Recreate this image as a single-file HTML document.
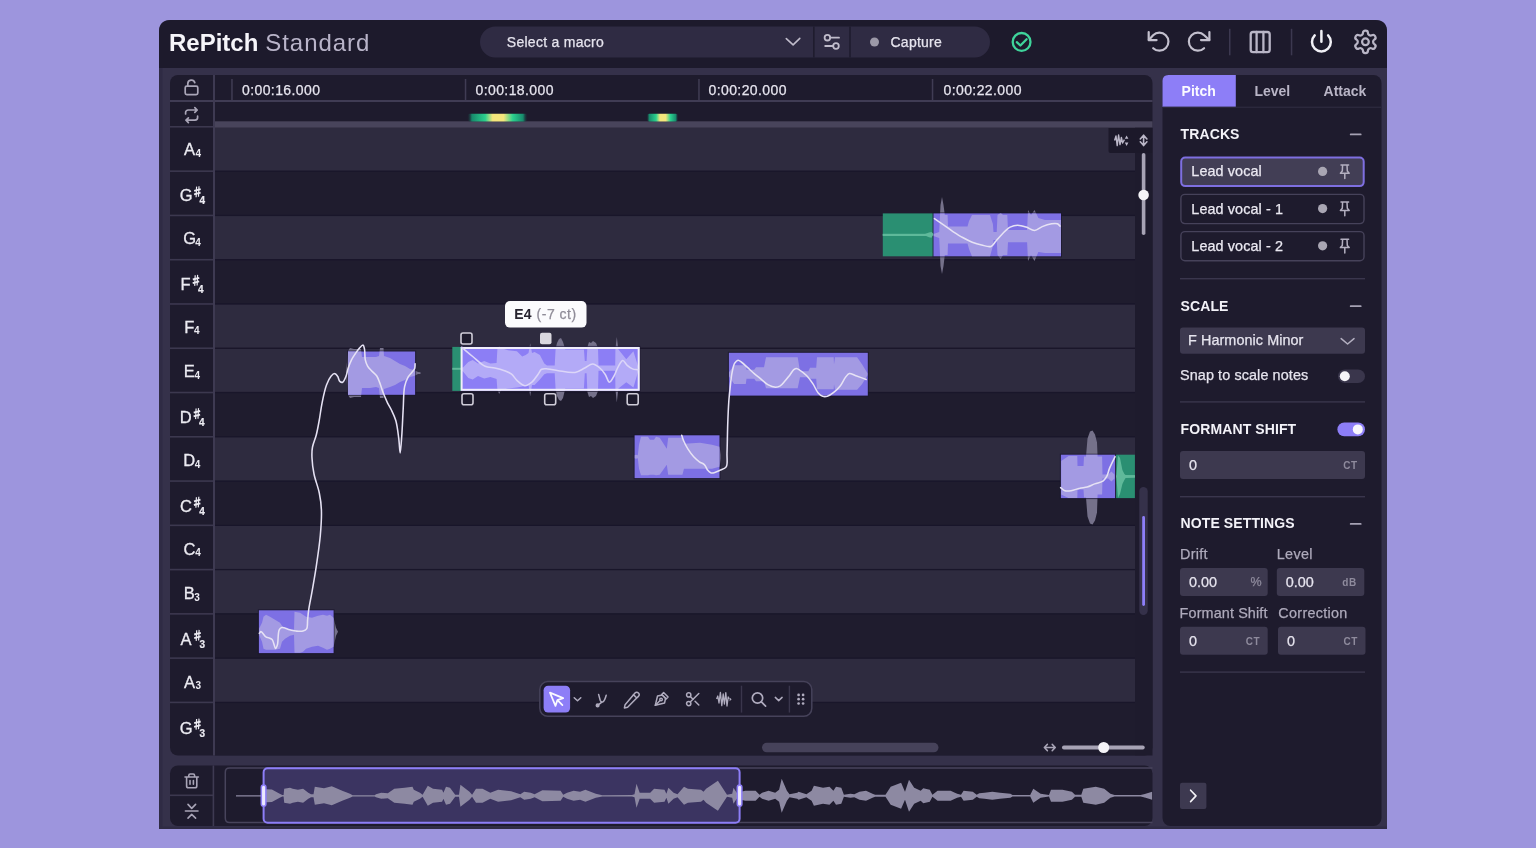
<!DOCTYPE html><html><head><meta charset="utf-8"><title>RePitch Standard</title><style>
*{box-sizing:border-box;margin:0;padding:0}
html,body{width:1536px;height:848px;overflow:hidden;background:#9d95dd;font-family:"Liberation Sans", sans-serif}
.a{position:absolute}
svg text{font-family:"Liberation Sans", sans-serif}
svg{will-change:transform}
</style></head><body>
<svg class="a" style="left:0;top:0" width="1536" height="848" viewBox="0 0 1536 848">
<defs>
<linearGradient id="mk" x1="0" x2="1" y1="0" y2="0"><stop offset="0" stop-color="#1e1b2d" stop-opacity="0"/><stop offset="0.08" stop-color="#178a6c"/><stop offset="0.3" stop-color="#2bd08e"/><stop offset="0.42" stop-color="#f4e67c"/><stop offset="0.6" stop-color="#f4e67c"/><stop offset="0.75" stop-color="#2bd08e"/><stop offset="0.92" stop-color="#178a6c"/><stop offset="1" stop-color="#1e1b2d" stop-opacity="0"/></linearGradient>
</defs>
<path d="M159,32 Q159,20 171,20 L1375,20 Q1387,20 1387,32 L1387,829 L159,829 Z" fill="#35314a"/>
<path d="M159,32 Q159,20 171,20 L1375,20 Q1387,20 1387,32 L1387,68 L159,68 Z" fill="#1d1a2c"/>
<rect x="159" y="68" width="3.5" height="761" fill="#2f2b44"/>
<rect x="159" y="826.6" width="1228" height="2.4" fill="#2f2b44"/>
<text x="169" y="50.8" font-size="24" font-weight="bold" fill="#f6f5fa">RePitch</text>
<text x="265.3" y="50.8" font-size="24" letter-spacing="0.95" fill="#b9b4c9">Standard</text>
<rect x="480" y="26.5" width="510" height="31" rx="15.5" fill="#2f2b43"/>
<rect x="813" y="26.5" width="1.6" height="31" fill="#1f1c2e"/>
<rect x="849.2" y="26.5" width="1.6" height="31" fill="#1f1c2e"/>
<text x="506.8" y="46.5" font-size="14" letter-spacing="0.28" stroke="#e6e4ee" stroke-width="0.25" fill="#e6e4ee">Select a macro</text>
<path d="M786.3,38.6 L793.1,44.8 L799.8,38.4" fill="none" stroke="#c0bccb" stroke-width="1.6" stroke-linecap="round" stroke-linejoin="round"/>
<g fill="none" stroke="#c0bccb" stroke-width="1.8" stroke-linecap="round"><circle cx="827.4" cy="37.7" r="2.8"/><path d="M830.3,37.7 H839"/><circle cx="836" cy="46" r="2.8"/><path d="M825.2,46 H833.1"/></g>
<circle cx="874.5" cy="42" r="4.5" fill="#9c99a8"/>
<text x="890.5" y="46.5" font-size="14" letter-spacing="0.25" stroke="#e6e4ee" stroke-width="0.25" fill="#e6e4ee">Capture</text>
<g fill="none" stroke="#3fd49b" stroke-width="2.3" stroke-linecap="round" stroke-linejoin="round"><circle cx="1021.6" cy="41.9" r="8.9"/><path d="M1016.8,42.2 L1020.4,45.5 L1026.6,39.3"/></g>
<g fill="none" stroke="#c3c0ce" stroke-width="2.2" stroke-linecap="round" stroke-linejoin="round">
<path d="M1153.2,48.2 A9,9 0 1 0 1153.1,35.3 L1148.8,40"/><path d="M1148.7,32 V40.1 H1156.6"/>
<path d="M1204.1,48.2 A9,9 0 1 1 1204.2,35.3 L1209.3,40"/><path d="M1209.4,32 V40.1 H1201"/>
</g>
<rect x="1229" y="28.8" width="1.5" height="26.5" fill="#3c3850"/>
<rect x="1290.8" y="28.8" width="1.5" height="26.5" fill="#3c3850"/>
<g fill="none" stroke="#b9b5c6" stroke-width="2.3" stroke-linecap="round" stroke-linejoin="round"><rect x="1250.7" y="32" width="19" height="20.2" rx="2.4"/><path d="M1256.6,32 V52.2 M1263.4,32 V52.2"/></g>
<g fill="none" stroke="#f1f0f6" stroke-width="2.5" stroke-linecap="round"><path d="M1321.4,31 V41.8"/><path d="M1328.1,35.4 A9.4,9.4 0 1 1 1314.7,35.4"/></g>
<g transform="translate(1352,28.4) scale(1.12)" fill="none" stroke="#b9b5c6" stroke-width="2" stroke-linecap="round" stroke-linejoin="round"><path d="M12.22 2h-.44a2 2 0 0 0-2 2v.18a2 2 0 0 1-1 1.73l-.43.25a2 2 0 0 1-2 0l-.15-.08a2 2 0 0 0-2.73.73l-.22.38a2 2 0 0 0 .73 2.73l.15.1a2 2 0 0 1 1 1.72v.51a2 2 0 0 1-1 1.74l-.15.09a2 2 0 0 0-.73 2.730l.22.38a2 2 0 0 0 2.73.73l.15-.08a2 2 0 0 1 2 0l.43.25a2 2 0 0 1 1 1.73V20a2 2 0 0 0 2 2h.44a2 2 0 0 0 2-2v-.18a2 2 0 0 1 1-1.73l.43-.25a2 2 0 0 1 2 0l.15.08a2 2 0 0 0 2.73-.73l.22-.39a2 2 0 0 0-.73-2.73l-.15-.08a2 2 0 0 1-1-1.74v-.5a2 2 0 0 1 1-1.74l.15-.09a2 2 0 0 0 .73-2.73l-.22-.38a2 2 0 0 0-2.73-.73l-.15.08a2 2 0 0 1-2 0l-.43-.25a2 2 0 0 1-1-1.73V4a2 2 0 0 0-2-2z"/><circle cx="12" cy="12" r="3"/></g>
<rect x="170" y="75" width="982.5" height="680.5" rx="8" fill="#1e1b2d"/>
<clipPath id="pclip"><rect x="170" y="75" width="982.5" height="680.5" rx="8"/></clipPath>
<g clip-path="url(#pclip)">
<rect x="215" y="126.90" width="920" height="44.27" fill="#2e2b3f"/>
<rect x="215" y="171.17" width="920" height="44.27" fill="#1f1c2e"/>
<rect x="215" y="170.52" width="920" height="1.3" fill="#19162a"/>
<rect x="170" y="170.37" width="43" height="1.6" fill="#3c384f"/>
<rect x="215" y="215.44" width="920" height="44.27" fill="#2e2b3f"/>
<rect x="215" y="214.79" width="920" height="1.3" fill="#19162a"/>
<rect x="170" y="214.64" width="43" height="1.6" fill="#3c384f"/>
<rect x="215" y="259.71" width="920" height="44.27" fill="#1f1c2e"/>
<rect x="215" y="259.06" width="920" height="1.3" fill="#19162a"/>
<rect x="170" y="258.91" width="43" height="1.6" fill="#3c384f"/>
<rect x="215" y="303.98" width="920" height="44.27" fill="#2e2b3f"/>
<rect x="215" y="303.33" width="920" height="1.3" fill="#19162a"/>
<rect x="170" y="303.18" width="43" height="1.6" fill="#3c384f"/>
<rect x="215" y="348.25" width="920" height="44.27" fill="#2e2b3f"/>
<rect x="215" y="347.60" width="920" height="1.3" fill="#19162a"/>
<rect x="170" y="347.45" width="43" height="1.6" fill="#3c384f"/>
<rect x="215" y="392.52" width="920" height="44.27" fill="#1f1c2e"/>
<rect x="215" y="391.87" width="920" height="1.3" fill="#19162a"/>
<rect x="170" y="391.72" width="43" height="1.6" fill="#3c384f"/>
<rect x="215" y="436.79" width="920" height="44.27" fill="#2e2b3f"/>
<rect x="215" y="436.14" width="920" height="1.3" fill="#19162a"/>
<rect x="170" y="435.99" width="43" height="1.6" fill="#3c384f"/>
<rect x="215" y="481.06" width="920" height="44.27" fill="#1f1c2e"/>
<rect x="215" y="480.41" width="920" height="1.3" fill="#19162a"/>
<rect x="170" y="480.26" width="43" height="1.6" fill="#3c384f"/>
<rect x="215" y="525.33" width="920" height="44.27" fill="#2e2b3f"/>
<rect x="215" y="524.68" width="920" height="1.3" fill="#19162a"/>
<rect x="170" y="524.53" width="43" height="1.6" fill="#3c384f"/>
<rect x="215" y="569.60" width="920" height="44.27" fill="#2e2b3f"/>
<rect x="215" y="568.95" width="920" height="1.3" fill="#19162a"/>
<rect x="170" y="568.80" width="43" height="1.6" fill="#3c384f"/>
<rect x="215" y="613.87" width="920" height="44.27" fill="#1f1c2e"/>
<rect x="215" y="613.22" width="920" height="1.3" fill="#19162a"/>
<rect x="170" y="613.07" width="43" height="1.6" fill="#3c384f"/>
<rect x="215" y="658.14" width="920" height="44.27" fill="#2e2b3f"/>
<rect x="215" y="657.49" width="920" height="1.3" fill="#19162a"/>
<rect x="170" y="657.34" width="43" height="1.6" fill="#3c384f"/>
<rect x="215" y="702.41" width="920" height="53.09" fill="#1f1c2e"/>
<rect x="215" y="701.76" width="920" height="1.3" fill="#19162a"/>
<rect x="170" y="701.61" width="43" height="1.6" fill="#3c384f"/>
</g>
<rect x="170" y="100" width="982.5" height="2" fill="#403c54"/>
<rect x="170" y="126" width="43" height="1.6" fill="#3c384f"/>
<rect x="215" y="121.3" width="937.5" height="6.2" fill="#48445b"/>
<rect x="213" y="75" width="2" height="680.5" fill="#3e3a52"/>
<rect x="231.2" y="79" width="1.5" height="21" fill="#403c54"/>
<rect x="464.8" y="79" width="1.5" height="21" fill="#403c54"/>
<rect x="698.2" y="79" width="1.5" height="21" fill="#403c54"/>
<rect x="931.8" y="79" width="1.5" height="21" fill="#403c54"/>
<text x="242" y="95" font-size="14" letter-spacing="0.4" stroke="#e6e4ee" stroke-width="0.25" fill="#e6e4ee">0:00:16.000</text>
<text x="475.5" y="95" font-size="14" letter-spacing="0.4" stroke="#e6e4ee" stroke-width="0.25" fill="#e6e4ee">0:00:18.000</text>
<text x="708.5" y="95" font-size="14" letter-spacing="0.4" stroke="#e6e4ee" stroke-width="0.25" fill="#e6e4ee">0:00:20.000</text>
<text x="943.5" y="95" font-size="14" letter-spacing="0.4" stroke="#e6e4ee" stroke-width="0.25" fill="#e6e4ee">0:00:22.000</text>
<rect x="467" y="113.8" width="61" height="7.8" rx="3" fill="url(#mk)"/>
<rect x="646.5" y="113.8" width="32" height="7.8" rx="3" fill="url(#mk)"/>
<g fill="none" stroke="#a9a5b7" stroke-width="1.7" stroke-linecap="round" stroke-linejoin="round">
<rect x="185.2" y="86.2" width="12.6" height="8.4" rx="1.6"/><path d="M187.8,86.2 V83.6 A3.6,3.6 0 0 1 194.8,82.6"/>
<path d="M185.6,114 V112.6 A2.6,2.6 0 0 1 188.2,110 H197.2 M194.8,107.6 L197.2,110 L194.8,112.4"/>
<path d="M197.6,116.2 V117.6 A2.6,2.6 0 0 1 195,120.2 H186 M188.4,122.6 L186,120.2 L188.4,117.8"/>
</g>
<text x="184.00" y="155.3" font-size="16.5" stroke="#ecebf2" stroke-width="0.3" fill="#ecebf2">A</text>
<text x="195.40" y="156.9" font-size="10" font-weight="bold" fill="#ecebf2">4</text>
<text x="179.75" y="201.2" font-size="16.5" stroke="#ecebf2" stroke-width="0.3" fill="#ecebf2">G</text>
<g stroke="#ecebf2" stroke-linecap="butt"><path d="M196.6,186.6 L196.1,197.2 M199.0,186.2 L198.5,196.8" stroke-width="1.2"/><path d="M194.2,190.8 L200.7,189.1 M194.1,194.4 L200.6,192.7" stroke-width="1.9"/></g>
<text x="199.45" y="204.2" font-size="10" font-weight="bold" stroke="#ecebf2" stroke-width="0.2" fill="#ecebf2">4</text>
<text x="183.30" y="244.1" font-size="16.5" stroke="#ecebf2" stroke-width="0.3" fill="#ecebf2">G</text>
<text x="195.30" y="245.7" font-size="10" font-weight="bold" fill="#ecebf2">4</text>
<text x="180.60" y="289.9" font-size="16.5" stroke="#ecebf2" stroke-width="0.3" fill="#ecebf2">F</text>
<g stroke="#ecebf2" stroke-linecap="butt"><path d="M195.2,275.3 L194.7,285.9 M197.6,274.9 L197.1,285.5" stroke-width="1.2"/><path d="M192.8,279.5 L199.3,277.8 M192.7,283.1 L199.2,281.4" stroke-width="1.9"/></g>
<text x="198.10" y="293.0" font-size="10" font-weight="bold" stroke="#ecebf2" stroke-width="0.2" fill="#ecebf2">4</text>
<text x="184.15" y="332.8" font-size="16.5" stroke="#ecebf2" stroke-width="0.3" fill="#ecebf2">F</text>
<text x="193.95" y="334.4" font-size="10" font-weight="bold" fill="#ecebf2">4</text>
<text x="183.70" y="377.2" font-size="16.5" stroke="#ecebf2" stroke-width="0.3" fill="#ecebf2">E</text>
<text x="194.40" y="378.8" font-size="10" font-weight="bold" fill="#ecebf2">4</text>
<text x="179.75" y="423.1" font-size="16.5" stroke="#ecebf2" stroke-width="0.3" fill="#ecebf2">D</text>
<g stroke="#ecebf2" stroke-linecap="butt"><path d="M196.1,408.5 L195.6,419.1 M198.5,408.1 L198.0,418.7" stroke-width="1.2"/><path d="M193.7,412.7 L200.2,411.0 M193.6,416.3 L200.1,414.6" stroke-width="1.9"/></g>
<text x="198.95" y="426.2" font-size="10" font-weight="bold" stroke="#ecebf2" stroke-width="0.2" fill="#ecebf2">4</text>
<text x="183.30" y="465.9" font-size="16.5" stroke="#ecebf2" stroke-width="0.3" fill="#ecebf2">D</text>
<text x="194.80" y="467.5" font-size="10" font-weight="bold" fill="#ecebf2">4</text>
<text x="179.90" y="511.8" font-size="16.5" stroke="#ecebf2" stroke-width="0.3" fill="#ecebf2">C</text>
<g stroke="#ecebf2" stroke-linecap="butt"><path d="M196.4,497.2 L195.9,507.8 M198.8,496.8 L198.3,507.4" stroke-width="1.2"/><path d="M194.0,501.4 L200.5,499.7 M193.9,505.0 L200.4,503.3" stroke-width="1.9"/></g>
<text x="199.30" y="515.0" font-size="10" font-weight="bold" stroke="#ecebf2" stroke-width="0.2" fill="#ecebf2">4</text>
<text x="183.45" y="554.7" font-size="16.5" stroke="#ecebf2" stroke-width="0.3" fill="#ecebf2">C</text>
<text x="195.15" y="556.3" font-size="10" font-weight="bold" fill="#ecebf2">4</text>
<text x="183.80" y="599.0" font-size="16.5" stroke="#ecebf2" stroke-width="0.3" fill="#ecebf2">B</text>
<text x="194.30" y="600.6" font-size="10" font-weight="bold" fill="#ecebf2">3</text>
<text x="180.45" y="644.9" font-size="16.5" stroke="#ecebf2" stroke-width="0.3" fill="#ecebf2">A</text>
<g stroke="#ecebf2" stroke-linecap="butt"><path d="M196.7,630.3 L196.2,640.9 M199.1,629.9 L198.6,640.5" stroke-width="1.2"/><path d="M194.2,634.5 L200.8,632.8 M194.2,638.1 L200.7,636.4" stroke-width="1.9"/></g>
<text x="199.55" y="648.1" font-size="10" font-weight="bold" stroke="#ecebf2" stroke-width="0.2" fill="#ecebf2">3</text>
<text x="184.00" y="687.8" font-size="16.5" stroke="#ecebf2" stroke-width="0.3" fill="#ecebf2">A</text>
<text x="195.40" y="689.4" font-size="10" font-weight="bold" fill="#ecebf2">3</text>
<text x="179.75" y="733.6" font-size="16.5" stroke="#ecebf2" stroke-width="0.3" fill="#ecebf2">G</text>
<g stroke="#ecebf2" stroke-linecap="butt"><path d="M196.6,719.0 L196.1,729.6 M199.0,718.6 L198.5,729.2" stroke-width="1.2"/><path d="M194.2,723.2 L200.7,721.5 M194.1,726.8 L200.6,725.1" stroke-width="1.9"/></g>
<text x="199.45" y="736.9" font-size="10" font-weight="bold" stroke="#ecebf2" stroke-width="0.2" fill="#ecebf2">3</text>
<path d="M259.0,628.7 L262.0,622.7 L263.5,616.7 L266.0,614.7 L270.0,616.7 L275.0,619.7 L280.0,622.7 L282.0,625.7 L285.0,628.7 L290.0,629.7 L294.0,629.7 L294.5,611.7 L300.0,612.7 L303.0,614.7 L306.0,616.7 L312.0,617.7 L318.0,615.7 L323.0,614.7 L327.0,615.7 L330.0,614.7 L333.6,617.7 L336.0,627.7 L338.0,631.7 L338.0,631.7 L336.0,635.7 L333.6,646.7 L330.0,648.7 L327.0,649.7 L323.0,647.7 L318.0,645.7 L312.0,646.7 L306.0,648.7 L303.0,651.7 L300.0,652.7 L294.5,652.7 L294.0,634.7 L290.0,635.7 L285.0,638.7 L282.0,641.7 L280.0,648.7 L275.0,649.7 L270.0,649.7 L266.0,649.7 L263.5,648.7 L262.0,641.7 L259.0,634.7Z" fill="#75718a"/>
<rect x="258.9" y="610.3" width="74.7" height="42.8" fill="none" stroke="#1a162d" stroke-width="2" stroke-opacity="0.7"/>
<rect x="258.9" y="610.3" width="74.7" height="42.8" fill="#7d70e4"/>
<clipPath id="nc0"><rect x="258.9" y="610.3" width="74.7" height="42.8"/></clipPath>
<path d="M259.0,628.7 L262.0,622.7 L263.5,616.7 L266.0,614.7 L270.0,616.7 L275.0,619.7 L280.0,622.7 L282.0,625.7 L285.0,628.7 L290.0,629.7 L294.0,629.7 L294.5,611.7 L300.0,612.7 L303.0,614.7 L306.0,616.7 L312.0,617.7 L318.0,615.7 L323.0,614.7 L327.0,615.7 L330.0,614.7 L333.6,617.7 L336.0,627.7 L338.0,631.7 L338.0,631.7 L336.0,635.7 L333.6,646.7 L330.0,648.7 L327.0,649.7 L323.0,647.7 L318.0,645.7 L312.0,646.7 L306.0,648.7 L303.0,651.7 L300.0,652.7 L294.5,652.7 L294.0,634.7 L290.0,635.7 L285.0,638.7 L282.0,641.7 L280.0,648.7 L275.0,649.7 L270.0,649.7 L266.0,649.7 L263.5,648.7 L262.0,641.7 L259.0,634.7Z" fill="#a39ae3" clip-path="url(#nc0)"/>
<path d="M346.0,373.1 L348.0,351.1 L350.0,348.1 L354.0,349.1 L361.0,349.1 L362.0,357.1 L370.0,357.1 L376.0,357.1 L379.0,356.1 L380.0,348.1 L383.5,348.1 L384.0,356.1 L390.0,358.1 L395.0,361.1 L400.0,364.1 L405.0,366.1 L410.0,369.1 L414.0,370.1 L418.0,372.1 L420.5,372.3 L420.5,373.9 L418.0,374.1 L414.0,376.1 L410.0,377.1 L405.0,380.1 L400.0,382.1 L395.0,385.1 L390.0,387.1 L384.0,389.1 L383.5,398.1 L380.0,398.1 L379.0,388.1 L376.0,387.1 L370.0,388.1 L362.0,388.1 L361.0,397.1 L354.0,397.1 L350.0,398.1 L348.0,395.1 L346.0,373.1Z" fill="#75718a"/>
<rect x="348.0" y="351.5" width="67.1" height="43.3" fill="none" stroke="#1a162d" stroke-width="2" stroke-opacity="0.7"/>
<rect x="348.0" y="351.5" width="67.1" height="43.3" fill="#7d70e4"/>
<clipPath id="nc1"><rect x="348.0" y="351.5" width="67.1" height="43.3"/></clipPath>
<path d="M346.0,373.1 L348.0,351.1 L350.0,348.1 L354.0,349.1 L361.0,349.1 L362.0,357.1 L370.0,357.1 L376.0,357.1 L379.0,356.1 L380.0,348.1 L383.5,348.1 L384.0,356.1 L390.0,358.1 L395.0,361.1 L400.0,364.1 L405.0,366.1 L410.0,369.1 L414.0,370.1 L418.0,372.1 L420.5,372.3 L420.5,373.9 L418.0,374.1 L414.0,376.1 L410.0,377.1 L405.0,380.1 L400.0,382.1 L395.0,385.1 L390.0,387.1 L384.0,389.1 L383.5,398.1 L380.0,398.1 L379.0,388.1 L376.0,387.1 L370.0,388.1 L362.0,388.1 L361.0,397.1 L354.0,397.1 L350.0,398.1 L348.0,395.1 L346.0,373.1Z" fill="#a39ae3" clip-path="url(#nc1)"/>
<path d="M461.0,367.4 L463.0,367.4 L468.3,361.9 L472.7,359.9 L478.0,363.6 L484.2,360.9 L490.4,363.6 L496.6,362.9 L497.4,348.9 L499.2,345.9 L501.0,347.9 L508.0,350.3 L516.9,351.2 L522.2,356.5 L525.7,354.9 L528.5,352.9 L530.2,343.3 L532.0,352.9 L534.6,352.1 L539.9,354.9 L544.3,363.6 L547.0,365.4 L554.7,365.4 L555.6,348.9 L557.0,342.9 L559.0,338.9 L561.0,337.9 L563.0,341.9 L565.3,349.5 L583.9,349.5 L584.8,360.9 L586.6,360.9 L587.4,346.9 L589.0,341.9 L591.0,342.9 L593.0,340.9 L596.0,342.9 L598.0,347.9 L598.5,365.4 L615.2,365.4 L615.4,348.9 L616.8,336.9 L618.4,349.5 L626.3,359.2 L633.4,351.2 L638.0,365.9 L638.0,371.9 L633.4,387.5 L626.3,382.2 L618.4,388.4 L616.8,402.5 L615.4,388.9 L615.2,370.7 L598.5,370.7 L598.0,390.9 L596.0,395.9 L593.0,397.9 L591.0,395.9 L589.0,396.9 L587.4,391.9 L586.6,373.3 L584.8,373.3 L583.9,388.4 L565.3,388.4 L563.0,397.9 L561.0,400.9 L559.0,399.9 L557.0,395.9 L555.6,388.9 L554.7,373.3 L547.0,373.3 L544.3,374.2 L539.9,379.5 L534.6,384.9 L532.0,384.9 L530.2,396.3 L528.5,384.9 L525.7,384.9 L522.2,386.6 L516.9,387.5 L508.0,388.4 L501.0,389.9 L499.2,393.9 L497.4,389.9 L496.6,378.9 L490.4,376.9 L484.2,378.6 L478.0,375.9 L472.7,379.5 L468.3,377.9 L463.0,371.4 L461.0,370.4Z" fill="#75718a"/>
<rect x="460.7" y="346.9" width="178.7" height="44.0" fill="none" stroke="#1a162d" stroke-width="2" stroke-opacity="0.7"/>
<rect x="460.7" y="346.9" width="178.7" height="44.0" fill="#8c7ef5"/>
<clipPath id="nc2"><rect x="460.7" y="346.9" width="178.7" height="44.0"/></clipPath>
<path d="M461.0,367.4 L463.0,367.4 L468.3,361.9 L472.7,359.9 L478.0,363.6 L484.2,360.9 L490.4,363.6 L496.6,362.9 L497.4,348.9 L499.2,345.9 L501.0,347.9 L508.0,350.3 L516.9,351.2 L522.2,356.5 L525.7,354.9 L528.5,352.9 L530.2,343.3 L532.0,352.9 L534.6,352.1 L539.9,354.9 L544.3,363.6 L547.0,365.4 L554.7,365.4 L555.6,348.9 L557.0,342.9 L559.0,338.9 L561.0,337.9 L563.0,341.9 L565.3,349.5 L583.9,349.5 L584.8,360.9 L586.6,360.9 L587.4,346.9 L589.0,341.9 L591.0,342.9 L593.0,340.9 L596.0,342.9 L598.0,347.9 L598.5,365.4 L615.2,365.4 L615.4,348.9 L616.8,336.9 L618.4,349.5 L626.3,359.2 L633.4,351.2 L638.0,365.9 L638.0,371.9 L633.4,387.5 L626.3,382.2 L618.4,388.4 L616.8,402.5 L615.4,388.9 L615.2,370.7 L598.5,370.7 L598.0,390.9 L596.0,395.9 L593.0,397.9 L591.0,395.9 L589.0,396.9 L587.4,391.9 L586.6,373.3 L584.8,373.3 L583.9,388.4 L565.3,388.4 L563.0,397.9 L561.0,400.9 L559.0,399.9 L557.0,395.9 L555.6,388.9 L554.7,373.3 L547.0,373.3 L544.3,374.2 L539.9,379.5 L534.6,384.9 L532.0,384.9 L530.2,396.3 L528.5,384.9 L525.7,384.9 L522.2,386.6 L516.9,387.5 L508.0,388.4 L501.0,389.9 L499.2,393.9 L497.4,389.9 L496.6,378.9 L490.4,376.9 L484.2,378.6 L478.0,375.9 L472.7,379.5 L468.3,377.9 L463.0,371.4 L461.0,370.4Z" fill="#b3aaf7" clip-path="url(#nc2)"/>
<path d="M634.6,455.2 L636.0,454.7 L637.8,455.2 L639.0,444.7 L641.0,436.7 L648.0,436.7 L650.0,439.7 L654.0,439.7 L656.0,436.7 L659.7,437.7 L666.8,448.7 L668.2,437.7 L682.4,437.7 L684.0,443.7 L700.0,442.7 L712.0,444.7 L719.5,446.7 L721.0,454.7 L721.0,458.7 L719.5,466.7 L712.0,468.7 L700.0,468.7 L684.0,468.7 L682.4,474.7 L668.2,474.7 L666.8,464.7 L659.7,474.7 L656.0,475.2 L654.0,474.7 L650.0,474.7 L648.0,475.2 L641.0,475.2 L639.0,468.7 L637.8,458.2 L636.0,458.7 L634.6,458.2Z" fill="#75718a"/>
<rect x="634.6" y="435.3" width="84.9" height="42.8" fill="none" stroke="#1a162d" stroke-width="2" stroke-opacity="0.7"/>
<rect x="634.6" y="435.3" width="84.9" height="42.8" fill="#7d70e4"/>
<clipPath id="nc3"><rect x="634.6" y="435.3" width="84.9" height="42.8"/></clipPath>
<path d="M634.6,455.2 L636.0,454.7 L637.8,455.2 L639.0,444.7 L641.0,436.7 L648.0,436.7 L650.0,439.7 L654.0,439.7 L656.0,436.7 L659.7,437.7 L666.8,448.7 L668.2,437.7 L682.4,437.7 L684.0,443.7 L700.0,442.7 L712.0,444.7 L719.5,446.7 L721.0,454.7 L721.0,458.7 L719.5,466.7 L712.0,468.7 L700.0,468.7 L684.0,468.7 L682.4,474.7 L668.2,474.7 L666.8,464.7 L659.7,474.7 L656.0,475.2 L654.0,474.7 L650.0,474.7 L648.0,475.2 L641.0,475.2 L639.0,468.7 L637.8,458.2 L636.0,458.7 L634.6,458.2Z" fill="#a39ae3" clip-path="url(#nc3)"/>
<path d="M729.0,372.2 L734.1,365.2 L745.8,365.2 L746.5,369.7 L754.2,369.7 L756.0,367.2 L764.0,367.2 L766.0,357.2 L797.7,357.2 L800.0,371.2 L808.4,371.2 L810.0,367.7 L816.2,367.7 L817.0,357.2 L833.7,357.2 L834.0,364.2 L835.0,357.2 L857.1,357.2 L862.0,364.2 L867.5,373.2 L867.5,375.2 L862.0,384.2 L857.1,389.7 L835.0,389.7 L834.0,384.2 L833.7,389.2 L817.0,389.2 L816.2,378.7 L810.0,378.7 L808.4,377.2 L800.0,377.2 L797.7,388.2 L766.0,388.2 L764.0,381.2 L756.0,381.2 L754.2,378.7 L746.5,378.7 L745.8,383.9 L734.1,383.9 L729.0,376.2Z" fill="#75718a"/>
<rect x="728.9" y="352.8" width="138.9" height="42.8" fill="none" stroke="#1a162d" stroke-width="2" stroke-opacity="0.7"/>
<rect x="728.9" y="352.8" width="138.9" height="42.8" fill="#7d70e4"/>
<clipPath id="nc4"><rect x="728.9" y="352.8" width="138.9" height="42.8"/></clipPath>
<path d="M729.0,372.2 L734.1,365.2 L745.8,365.2 L746.5,369.7 L754.2,369.7 L756.0,367.2 L764.0,367.2 L766.0,357.2 L797.7,357.2 L800.0,371.2 L808.4,371.2 L810.0,367.7 L816.2,367.7 L817.0,357.2 L833.7,357.2 L834.0,364.2 L835.0,357.2 L857.1,357.2 L862.0,364.2 L867.5,373.2 L867.5,375.2 L862.0,384.2 L857.1,389.7 L835.0,389.7 L834.0,384.2 L833.7,389.2 L817.0,389.2 L816.2,378.7 L810.0,378.7 L808.4,377.2 L800.0,377.2 L797.7,388.2 L766.0,388.2 L764.0,381.2 L756.0,381.2 L754.2,378.7 L746.5,378.7 L745.8,383.9 L734.1,383.9 L729.0,376.2Z" fill="#a39ae3" clip-path="url(#nc4)"/>
<path d="M933.5,233.9 L939.2,231.9 L940.5,204.9 L942.0,196.9 L943.5,204.9 L944.8,214.9 L947.6,214.9 L948.0,226.4 L967.5,226.4 L969.0,220.9 L972.0,214.9 L990.0,214.9 L992.9,223.9 L993.5,231.9 L996.7,231.9 L997.5,214.9 L1000.7,212.9 L1003.0,214.9 L1007.3,214.9 L1008.0,229.9 L1027.1,229.9 L1028.0,209.9 L1031.0,214.9 L1034.5,209.9 L1038.4,217.9 L1045.0,219.9 L1061.0,219.9 L1061.0,252.9 L1045.0,252.9 L1038.4,251.9 L1034.5,260.9 L1031.0,254.9 L1028.0,260.9 L1027.1,242.3 L1008.0,242.3 L1007.3,254.9 L1003.0,254.9 L1000.7,258.9 L997.5,254.9 L996.7,239.9 L993.5,239.9 L992.9,245.9 L990.0,256.4 L972.0,256.4 L969.0,248.9 L967.5,243.4 L948.0,243.4 L947.6,254.9 L944.8,254.9 L943.5,265.9 L942.0,273.9 L940.5,265.9 L939.2,237.9 L933.5,235.9Z" fill="#75718a"/>
<rect x="882.8" y="213.4" width="50.7" height="42.9" fill="#2a8f72"/>
<rect x="882.8" y="233.8" width="50.7" height="2.2" fill="#5fb99a"/>
<rect x="933.5" y="213.4" width="127.5" height="42.9" fill="none" stroke="#1a162d" stroke-width="2" stroke-opacity="0.7"/>
<rect x="933.5" y="213.4" width="127.5" height="42.9" fill="#7d70e4"/>
<clipPath id="nc5"><rect x="933.5" y="213.4" width="127.5" height="42.9"/></clipPath>
<path d="M933.5,233.9 L939.2,231.9 L940.5,204.9 L942.0,196.9 L943.5,204.9 L944.8,214.9 L947.6,214.9 L948.0,226.4 L967.5,226.4 L969.0,220.9 L972.0,214.9 L990.0,214.9 L992.9,223.9 L993.5,231.9 L996.7,231.9 L997.5,214.9 L1000.7,212.9 L1003.0,214.9 L1007.3,214.9 L1008.0,229.9 L1027.1,229.9 L1028.0,209.9 L1031.0,214.9 L1034.5,209.9 L1038.4,217.9 L1045.0,219.9 L1061.0,219.9 L1061.0,252.9 L1045.0,252.9 L1038.4,251.9 L1034.5,260.9 L1031.0,254.9 L1028.0,260.9 L1027.1,242.3 L1008.0,242.3 L1007.3,254.9 L1003.0,254.9 L1000.7,258.9 L997.5,254.9 L996.7,239.9 L993.5,239.9 L992.9,245.9 L990.0,256.4 L972.0,256.4 L969.0,248.9 L967.5,243.4 L948.0,243.4 L947.6,254.9 L944.8,254.9 L943.5,265.9 L942.0,273.9 L940.5,265.9 L939.2,237.9 L933.5,235.9Z" fill="#a39ae3" clip-path="url(#nc5)"/>
<path d="M1061.2,460.9 L1068.6,456.0 L1077.3,456.0 L1077.5,465.9 L1083.5,465.9 L1084.0,456.4 L1086.0,456.4 L1087.5,438.4 L1090.0,431.4 L1092.5,430.4 L1095.0,434.4 L1097.0,442.4 L1097.6,456.4 L1102.1,456.4 L1102.5,474.4 L1108.3,474.4 L1111.4,471.4 L1114.5,474.4 L1114.5,478.4 L1111.4,481.4 L1108.3,478.4 L1102.5,478.4 L1102.1,494.4 L1097.6,494.4 L1097.0,512.4 L1095.0,520.4 L1092.5,524.4 L1090.0,523.4 L1087.5,516.4 L1086.0,497.4 L1084.0,497.4 L1083.5,489.4 L1077.5,489.4 L1077.3,498.1 L1068.6,498.1 L1061.2,494.4Z" fill="#75718a"/>
<rect x="1116.0" y="454.7" width="18.9" height="43.4" fill="#2a8f72"/>
<rect x="1116.0" y="475.3" width="18.9" height="2.2" fill="#5fb99a"/>
<rect x="1060.9" y="454.7" width="54.2" height="43.4" fill="none" stroke="#1a162d" stroke-width="2" stroke-opacity="0.7"/>
<rect x="1060.9" y="454.7" width="54.2" height="43.4" fill="#7d70e4"/>
<clipPath id="nc6"><rect x="1060.9" y="454.7" width="54.2" height="43.4"/></clipPath>
<path d="M1061.2,460.9 L1068.6,456.0 L1077.3,456.0 L1077.5,465.9 L1083.5,465.9 L1084.0,456.4 L1086.0,456.4 L1087.5,438.4 L1090.0,431.4 L1092.5,430.4 L1095.0,434.4 L1097.0,442.4 L1097.6,456.4 L1102.1,456.4 L1102.5,474.4 L1108.3,474.4 L1111.4,471.4 L1114.5,474.4 L1114.5,478.4 L1111.4,481.4 L1108.3,478.4 L1102.5,478.4 L1102.1,494.4 L1097.6,494.4 L1097.0,512.4 L1095.0,520.4 L1092.5,524.4 L1090.0,523.4 L1087.5,516.4 L1086.0,497.4 L1084.0,497.4 L1083.5,489.4 L1077.5,489.4 L1077.3,498.1 L1068.6,498.1 L1061.2,494.4Z" fill="#a39ae3" clip-path="url(#nc6)"/>
<path d="M1116.3,476.4 L1118,455.4 L1120,458 L1122.4,470 L1124.4,474 L1125.6,474.9 L1134.9,475.3 L1134.9,477.5 L1125.6,477.9 L1124.4,480 L1122.4,484 L1120,494 L1118,498.1 Z" fill="#5fb99a"/>
<path d="M882.8,234.1 H925 L929,232.5 L931.5,232 L933.5,234 L931.5,237.7 L929,237.2 L925,235.6 H882.8 Z" fill="#5fb99a"/>
<rect x="452.3" y="346.9" width="8.8" height="44" fill="#2a8f72"/>
<rect x="452.3" y="367.8" width="8.8" height="2" fill="#5fb99a"/>
<rect x="461.6" y="348" width="177.1" height="41.8" fill="none" stroke="#f0eefa" stroke-width="2"/>
<path d="M259.3,633.3 C259.9,632.7 260.3,631.6 261.0,631.6 C262.2,631.6 264.4,636.0 265.9,636.9 C266.8,637.5 267.7,637.3 268.6,637.7 C269.7,638.1 271.1,638.4 272.1,639.5 C273.7,641.2 274.6,648.4 275.6,648.4 C276.3,648.4 276.9,646.5 277.4,644.8 C278.4,641.6 277.8,632.5 279.2,629.8 C279.9,628.5 280.6,627.9 281.8,627.6 C283.7,627.2 287.3,629.2 289.8,629.8 C292.0,630.3 293.9,630.9 296.0,631.1 C298.3,631.3 301.1,631.6 303.0,631.1 C304.5,630.7 305.8,630.2 306.6,628.9 C307.8,627.1 307.3,623.1 307.6,620.0 C308.0,616.7 308.1,613.7 308.7,609.9 C309.4,605.0 310.7,599.1 311.8,592.9 C313.1,585.3 314.8,576.4 316.1,567.4 C317.6,557.4 319.4,545.6 320.3,535.5 C321.1,526.5 321.7,517.6 321.4,510.0 C321.2,503.7 320.5,498.8 319.3,493.0 C318.1,486.8 315.2,480.1 314.0,474.0 C312.9,468.5 312.2,462.8 312.0,458.0 C311.8,454.0 311.8,450.7 312.5,447.0 C313.2,443.1 315.1,439.4 316.2,435.2 C317.4,430.6 318.3,425.6 319.2,420.5 C320.2,414.9 320.9,408.7 322.1,402.8 C323.3,396.9 324.7,389.9 326.5,385.1 C327.8,381.6 329.3,378.3 331.0,376.3 C332.1,375.0 333.5,373.5 334.6,373.6 C335.7,373.6 336.8,375.1 337.6,376.3 C338.6,377.7 338.7,380.5 339.8,381.4 C340.6,382.1 341.8,382.6 342.7,382.2 C344.0,381.6 345.2,378.3 346.1,376.0 C347.1,373.5 347.5,370.3 348.4,367.6 C349.3,365.0 350.3,362.3 351.5,359.9 C352.6,357.7 354.0,355.7 355.3,353.8 C356.6,351.9 357.8,349.9 359.2,348.4 C360.4,347.1 362.1,344.8 363.0,345.0 C363.8,345.2 364.1,347.4 364.5,349.2 C365.1,351.9 364.6,356.9 365.3,359.9 C365.8,362.3 366.5,364.2 367.6,366.1 C368.8,368.1 370.6,369.7 372.2,371.4 C373.7,373.0 375.6,374.2 376.8,376.0 C378.1,378.0 378.8,380.4 379.8,382.9 C380.9,385.7 381.7,388.9 382.9,392.1 C384.2,395.6 386.0,399.6 387.5,402.8 C388.8,405.5 390.1,407.3 391.4,410.0 C392.9,413.1 394.6,416.5 395.8,420.5 C397.3,425.6 398.0,432.6 398.7,438.2 C399.4,443.3 399.7,452.9 400.2,452.9 C400.7,452.9 401.3,442.8 401.7,436.7 C402.3,428.6 402.7,417.5 403.2,408.7 C403.7,400.9 403.4,392.4 404.6,386.6 C405.4,382.6 406.7,379.4 408.2,376.8 C409.3,374.9 410.9,373.7 412.0,372.2 C413.0,370.9 414.2,369.8 414.7,368.4 C415.2,367.0 415.0,365.3 415.1,363.8" fill="none" stroke="#e6e2f4" stroke-width="1.55" stroke-linecap="round" stroke-linejoin="round"/>
<path d="M461.6,347.2 C465.3,350.3 468.9,353.4 472.7,356.5 C476.7,359.8 481.0,364.5 485.1,366.3 C488.3,367.8 491.6,367.3 494.8,368.0 C498.1,368.7 501.6,369.6 504.5,370.7 C507.1,371.7 509.5,372.6 511.6,374.2 C513.7,375.8 514.8,378.5 516.9,380.4 C519.2,382.4 522.2,385.5 524.8,385.7 C527.2,385.9 529.8,383.9 531.9,382.2 C534.3,380.2 536.3,376.6 538.1,374.2 C539.5,372.4 540.0,370.2 541.6,369.3 C543.2,368.4 545.5,368.8 547.8,368.9 C550.8,369.1 554.4,370.2 558.3,370.7 C563.2,371.4 570.4,373.2 575.1,372.4 C578.9,371.8 581.7,369.5 584.8,368.0 C587.6,366.7 590.2,363.9 592.7,364.0 C595.1,364.1 597.7,366.3 599.8,368.0 C601.9,369.7 603.5,371.9 605.1,374.2 C606.8,376.6 607.9,382.1 609.5,382.2 C610.9,382.3 612.6,378.4 614.0,376.0 C615.6,373.2 616.8,369.0 618.4,366.3 C619.8,364.0 621.3,360.6 622.8,360.5 C624.2,360.4 625.6,364.0 627.2,365.4 C628.8,366.8 630.7,368.2 632.5,368.9 C634.2,369.6 636.0,369.5 637.8,369.8" fill="none" stroke="#dcd6f8" stroke-width="1.55" stroke-linecap="round" stroke-linejoin="round"/>
<path d="M681.7,435.3 C682.4,437.3 682.9,439.2 683.8,441.3 C684.9,443.8 686.4,446.6 688.0,449.1 C689.7,451.7 691.7,454.6 693.7,456.8 C695.5,458.8 697.5,460.4 699.4,461.8 C701.0,463.0 702.9,463.3 704.3,464.6 C705.8,466.0 706.6,468.9 707.8,470.3 C708.7,471.4 709.6,472.4 710.7,472.8 C711.9,473.2 713.5,472.8 714.9,472.4 C716.5,472.0 718.2,471.1 719.9,470.3 C721.9,469.3 724.9,468.9 726.2,466.8 C728.0,464.0 726.8,458.6 727.0,453.3 C727.3,445.6 727.4,434.1 727.7,425.0 C728.0,416.4 728.4,406.9 728.9,400.0 C729.3,395.0 729.7,391.6 730.2,387.2 C730.7,382.4 731.2,376.6 732.1,372.3 C732.8,368.9 733.4,365.3 734.7,363.2 C735.6,361.8 736.8,360.3 738.0,360.2 C739.2,360.1 740.5,361.5 741.9,362.5 C743.7,363.8 745.7,365.9 747.7,367.7 C749.8,369.6 752.0,371.7 754.2,373.6 C756.5,375.6 759.0,377.5 761.3,379.4 C763.5,381.2 765.4,383.3 767.8,384.6 C770.2,385.9 773.3,387.1 775.6,387.2 C777.3,387.2 778.8,386.7 780.2,385.9 C781.8,384.9 783.2,383.0 784.7,381.3 C786.4,379.4 788.3,376.9 789.9,374.9 C791.3,373.1 792.5,370.8 793.8,369.7 C794.7,369.0 795.5,368.4 796.4,368.4 C797.5,368.4 798.7,369.4 800.0,370.3 C801.9,371.5 804.5,373.4 806.5,375.5 C808.8,377.9 811.0,381.0 813.0,383.9 C814.9,386.8 816.3,390.8 818.2,393.0 C819.6,394.6 821.1,395.8 822.7,396.3 C824.2,396.8 825.7,396.7 827.3,396.3 C829.3,395.7 831.7,394.0 833.7,392.4 C836.0,390.6 838.3,388.3 840.2,385.9 C842.2,383.4 843.7,379.6 845.4,377.4 C846.7,375.8 847.7,374.0 849.3,373.6 C851.0,373.2 852.9,374.7 855.2,375.5 C858.3,376.6 862.5,378.1 866.2,379.4" fill="none" stroke="#e6e2f4" stroke-width="1.55" stroke-linecap="round" stroke-linejoin="round"/>
<path d="M934.4,218.6 C937.6,220.8 940.7,223.0 943.9,225.2 C947.0,227.4 950.1,229.7 953.3,231.8 C956.4,233.8 959.5,235.8 962.7,237.5 C965.8,239.2 969.0,240.9 972.2,242.2 C975.3,243.4 978.4,244.3 981.6,245.0 C984.7,245.7 988.6,247.3 991.0,246.4 C993.1,245.7 994.1,243.1 995.8,241.2 C997.9,238.9 1000.1,236.0 1002.5,233.7 C1004.9,231.3 1007.4,228.5 1010.1,227.1 C1012.5,225.9 1015.0,225.2 1017.6,225.2 C1020.3,225.2 1023.3,226.2 1026.1,227.1 C1029.0,228.0 1031.9,230.5 1034.6,230.4 C1037.2,230.3 1039.5,227.7 1042.2,226.6 C1045.1,225.4 1048.8,224.2 1051.6,223.8 C1053.7,223.5 1055.8,223.3 1057.3,223.8 C1058.5,224.2 1059.2,225.3 1060.1,226.1" fill="none" stroke="#e6e2f4" stroke-width="1.55" stroke-linecap="round" stroke-linejoin="round"/>
<path d="M1060.6,487.6 C1062.0,488.6 1063.2,490.2 1064.9,490.7 C1066.7,491.3 1068.9,491.0 1071.1,490.7 C1073.8,490.3 1077.0,488.8 1079.8,488.2 C1082.3,487.6 1084.8,487.7 1087.2,487.0 C1089.7,486.3 1092.1,484.9 1094.7,483.9 C1097.5,482.8 1101.2,482.4 1103.3,480.8 C1105.0,479.5 1106.0,477.7 1107.0,475.8 C1108.1,473.6 1108.4,471.1 1109.5,468.4 C1110.9,464.9 1113.2,460.5 1115.1,456.6" fill="none" stroke="#e6e2f4" stroke-width="1.55" stroke-linecap="round" stroke-linejoin="round"/>
<rect x="461.0" y="333.0" width="11" height="11" rx="2" fill="#1e1b2d" stroke="#cfccd8" stroke-width="1.6"/>
<rect x="540.0" y="332.8" width="11.5" height="11.5" rx="2" fill="#d9d7de"/>
<rect x="462.0" y="393.7" width="11" height="11" rx="2" fill="#1e1b2d" stroke="#cfccd8" stroke-width="1.6"/>
<rect x="544.7" y="393.7" width="11" height="11" rx="2" fill="#1e1b2d" stroke="#cfccd8" stroke-width="1.6"/>
<rect x="627.2" y="393.7" width="11" height="11" rx="2" fill="#1e1b2d" stroke="#cfccd8" stroke-width="1.6"/>
<rect x="505" y="301" width="81.5" height="26.6" rx="5" fill="#fbfbfd"/>
<text x="514.3" y="318.8" font-size="14" font-weight="bold" fill="#26232f">E4</text>
<text x="536.6" y="318.8" font-size="14" letter-spacing="0.5" stroke="#8f8c98" stroke-width="0.25" fill="#8f8c98">(-7 ct)</text>
<path d="M1108.5,128 H1152.5 V153 H1110.5 Q1108.5,153 1108.5,151 Z" fill="#1c192a"/>
<rect x="1135" y="153" width="17.5" height="602.5" fill="#1e1b2d"/>
<path d="M1114.6,140.5 L1116,136 L1117.2,145.6 L1118.6,135 L1120,144.6 L1121.4,137.5 L1122.6,143 L1124.4,139.6" fill="none" stroke="#bcb8c9" stroke-width="1.4" stroke-linejoin="round"/>
<path d="M1126.6,135.4 L1128.4,138.8 H1124.8 Z M1126.6,146 L1128.4,142.6 H1124.8 Z" fill="#bcb8c9"/>
<g fill="none" stroke="#bcb8c9" stroke-width="1.6" stroke-linecap="round" stroke-linejoin="round"><path d="M1140.3,139 L1143.6,135.2 L1146.9,139 M1140.3,141.8 L1143.6,145.6 L1146.9,141.8 M1143.6,135.6 V145.2"/></g>
<rect x="1141.8" y="153" width="3.6" height="82" rx="1.8" fill="#a7a3b5"/>
<circle cx="1143.6" cy="195" r="5.3" fill="#f5f4f8"/>
<rect x="1139.3" y="487" width="8.4" height="128" rx="4.2" fill="#35314a"/>
<rect x="1142.2" y="516" width="2.8" height="90" rx="1.4" fill="#8d7ef7"/>
<rect x="762" y="742.8" width="176.5" height="9.5" rx="4.75" fill="#46425a"/>
<path d="M1044.5,747.5 H1055 M1047.4,744.4 L1044.3,747.5 L1047.4,750.6 M1052.2,744.4 L1055.3,747.5 L1052.2,750.6" fill="none" stroke="#a9a5b7" stroke-width="1.5" stroke-linecap="round" stroke-linejoin="round"/>
<rect x="1062" y="745.6" width="82.7" height="3.8" rx="1.9" fill="#a7a3b5"/>
<circle cx="1103.7" cy="747.5" r="5.5" fill="#f5f4f8"/>
<rect x="539.8" y="681.6" width="272" height="34.7" rx="8" fill="#1e1b2d" stroke="#46425a" stroke-width="1.5"/>
<rect x="543.6" y="685.7" width="26.5" height="26.9" rx="4.5" fill="#8d7ef7"/>
<g transform="translate(547.6,690.3) scale(0.78)" fill="none" stroke="#fbfaff" stroke-width="2.2" stroke-linecap="round" stroke-linejoin="round"><path d="m3 3 7.07 16.97 2.51-7.39 7.39-2.51L3 3z"/><path d="m13 13 6 6"/></g>
<g fill="none" stroke="#b0acbf" stroke-width="1.5" stroke-linecap="round" stroke-linejoin="round">
<path d="M574.2,697.8 L577.5,700.8 L580.8,697.8"/>
<path d="M775.3,697.4 L778.7,700.6 L782.1,697.4"/>
<path d="M598.6,694.4 L600.2,700.2 Q600.9,702.4 602.9,701.9 Q604.6,701 606.2,695.2 M601.9,702.2 L597.6,705.3"/>
<circle cx="597.6" cy="705.4" r="1.3" fill="#b0acbf"/>
<path d="M635,693 a2.4,2.4 0 1 1 3.4,3.4 L627.6,707.2 L624.4,707.9 L625.1,704.7 Z M633.4,694.6 L636.8,698"/>
</g>
<g transform="translate(654,706.6) scale(0.64,-0.64)" fill="none" stroke="#b0acbf" stroke-width="2.3" stroke-linecap="round" stroke-linejoin="round"><path d="m12 19 7-7 3 3-7 7-3-3z"/><path d="m18 13-1.5-7.5L2 2l3.5 14.5L13 18l5-5z"/><path d="m2 2 7.586 7.586"/><circle cx="11" cy="11" r="2"/></g>
<g transform="translate(684.4,690.6) scale(0.72)" fill="none" stroke="#b0acbf" stroke-width="2.1" stroke-linecap="round" stroke-linejoin="round"><circle cx="6" cy="6" r="3"/><path d="M8.12 8.12 12 12"/><path d="M20 4 8.12 15.88"/><circle cx="6" cy="18" r="3"/><path d="M14.8 14.8 20 20"/></g>
<path d="M716.6,699 L717.8,696 L719,703 L720.4,692.4 L721.8,705.6 L723.2,694 L724.4,704 L725.8,692.6 L727,706 L728.2,697 L729,699" fill="none" stroke="#b0acbf" stroke-width="1.3" stroke-linejoin="round"/>
<path d="M729.6,697.4 L731.6,699.3 L729.6,701.2 Z" fill="#b0acbf"/>
<rect x="740.8" y="685.7" width="1.4" height="26.9" fill="#3a364c"/>
<rect x="788.7" y="685.7" width="1.4" height="26.9" fill="#3a364c"/>
<g fill="none" stroke="#b0acbf" stroke-width="1.7" stroke-linecap="round"><circle cx="757.5" cy="698" r="5.2"/><path d="M761.4,701.9 L765.6,706.1"/></g>
<circle cx="798.6" cy="694.9" r="1.35" fill="#b0acbf"/>
<circle cx="798.6" cy="699.2" r="1.35" fill="#b0acbf"/>
<circle cx="798.6" cy="703.5" r="1.35" fill="#b0acbf"/>
<circle cx="803.1" cy="694.9" r="1.35" fill="#b0acbf"/>
<circle cx="803.1" cy="699.2" r="1.35" fill="#b0acbf"/>
<circle cx="803.1" cy="703.5" r="1.35" fill="#b0acbf"/>
<rect x="170" y="765.5" width="982.5" height="60.5" rx="8" fill="#1e1b2d"/>
<rect x="212.6" y="765.5" width="1.6" height="60.5" fill="#3e3a52"/>
<rect x="170" y="794.5" width="43" height="1.6" fill="#3c384f"/>
<g fill="none" stroke="#a9a5b7" stroke-width="1.6" stroke-linecap="round" stroke-linejoin="round"><path d="M185,777 H198.4 M196.8,777 V786 Q196.8,787.8 195,787.8 H188.4 Q186.6,787.8 186.6,786 V777 M188.8,777 V775.4 Q188.8,774 190.2,774 H193.2 Q194.6,774 194.6,775.4 V777"/><path d="M190,780.6 V784.2 M193.4,780.6 V784.2"/>
<path d="M188,804.4 L191.7,808.4 L195.6,804.4 M185.4,811 H198 M188,818.1 L191.7,814.4 L195.6,818.1"/></g>
<path d="M1152.5,768 H229.5 Q225.3,768 225.3,772.2 V818 Q225.3,822.6 229.5,822.6 H1152.5" fill="none" stroke="#48445c" stroke-width="1.5"/>
<rect x="263.6" y="768.2" width="476" height="54.6" rx="4" fill="#3b3461" stroke="#8d7ef7" stroke-width="2"/>
<path d="M236.0,795.2 L262.0,795.2 L265.0,789.8 L266.7,789.3 L271.9,789.6 L279.7,793.8 L282.3,795.0 L283.6,795.0 L284.2,788.8 L290.0,787.8 L292.7,788.8 L297.9,789.8 L303.1,788.8 L308.3,792.8 L311.0,794.3 L313.5,794.3 L314.8,786.8 L324.0,788.3 L331.8,786.3 L342.2,790.8 L350.0,793.8 L352.6,795.2 L374.7,795.2 L376.0,794.3 L381.2,792.8 L387.8,793.3 L394.3,788.8 L404.7,787.8 L412.5,786.8 L413.8,789.8 L420.0,792.8 L422.6,794.8 L427.8,785.8 L433.0,788.8 L442.1,789.8 L443.4,792.8 L446.0,786.8 L450.0,787.8 L455.2,794.8 L459.0,794.8 L460.4,784.8 L469.5,791.8 L472.1,794.8 L476.0,788.8 L482.5,788.8 L490.3,792.8 L498.1,789.8 L511.1,791.3 L520.3,794.3 L524.2,791.8 L530.7,792.8 L534.6,794.3 L542.4,790.3 L560.6,790.8 L563.2,794.8 L567.1,792.8 L573.6,790.8 L580.1,791.8 L585.4,789.8 L595.8,793.8 L602.3,795.2 L632.0,795.0 L634.5,794.3 L636.5,783.8 L639.7,792.8 L650.2,792.8 L654.1,788.8 L664.5,789.8 L666.4,793.8 L668.4,787.8 L673.6,792.8 L677.5,794.3 L684.0,786.8 L687.9,788.8 L701.0,789.8 L703.5,791.8 L706.1,788.8 L717.9,780.8 L724.4,790.8 L727.0,794.8 L732.2,793.8 L733.5,787.8 L736.7,792.8 L745.2,790.8 L755.6,790.8 L759.5,794.8 L762.1,792.8 L768.6,790.8 L775.2,792.8 L779.1,789.8 L781.7,778.8 L786.9,790.8 L789.5,794.3 L797.3,792.8 L798.6,791.8 L806.4,794.3 L811.6,790.8 L813.9,785.8 L823.0,787.8 L829.5,786.8 L833.4,790.8 L836.0,786.8 L841.3,787.8 L843.9,794.8 L850.4,793.8 L854.3,794.3 L859.5,791.8 L866.0,790.8 L872.5,793.8 L875.1,794.8 L885.5,794.8 L890.7,786.8 L901.1,782.8 L905.0,791.8 L909.0,779.8 L914.2,787.8 L920.7,790.8 L923.3,788.3 L929.8,789.8 L932.4,794.8 L937.6,790.8 L950.6,790.8 L957.1,793.8 L961.0,794.8 L963.6,790.8 L972.8,791.8 L976.7,794.8 L979.3,793.3 L984.5,792.8 L992.3,791.8 L1000.0,792.8 L1010.4,793.8 L1012.5,795.0 L1030.2,795.0 L1033.3,788.8 L1040.6,793.8 L1049.0,795.0 L1051.0,789.8 L1062.5,789.8 L1071.9,791.8 L1075.0,794.8 L1081.3,794.8 L1083.3,788.8 L1095.8,786.8 L1104.2,788.8 L1110.4,793.8 L1114.6,795.0 L1140.6,795.0 L1143.8,794.3 L1152.1,791.8 L1152.1,799.8 L1143.8,797.3 L1140.6,796.6 L1114.6,796.6 L1110.4,797.8 L1104.2,802.8 L1095.8,804.8 L1083.3,802.8 L1081.3,796.8 L1075.0,796.8 L1071.9,799.8 L1062.5,801.8 L1051.0,801.8 L1049.0,796.6 L1040.6,797.8 L1033.3,802.8 L1030.2,796.6 L1012.5,796.6 L1010.4,797.8 L1000.0,798.8 L992.3,799.8 L984.5,798.8 L979.3,798.3 L976.7,796.8 L972.8,799.8 L963.6,800.8 L961.0,796.8 L957.1,797.8 L950.6,800.8 L937.6,800.8 L932.4,796.8 L929.8,801.8 L923.3,803.3 L920.7,800.8 L914.2,803.8 L909.0,811.8 L905.0,799.8 L901.1,808.8 L890.7,804.8 L885.5,796.8 L875.1,796.8 L872.5,797.8 L866.0,800.8 L859.5,799.8 L854.3,797.3 L850.4,797.8 L843.9,796.8 L841.3,803.8 L836.0,804.8 L833.4,800.8 L829.5,804.8 L823.0,803.8 L813.9,805.8 L811.6,800.8 L806.4,797.3 L798.6,799.8 L797.3,798.8 L789.5,797.3 L786.9,800.8 L781.7,812.8 L779.1,801.8 L775.2,798.8 L768.6,800.8 L762.1,798.8 L759.5,796.8 L755.6,800.8 L745.2,800.8 L736.7,798.8 L733.5,803.8 L732.2,797.8 L727.0,796.8 L724.4,800.8 L717.9,810.8 L706.1,802.8 L703.5,799.8 L701.0,801.8 L687.9,802.8 L684.0,804.8 L677.5,797.3 L673.6,798.8 L668.4,803.8 L666.4,797.8 L664.5,801.8 L654.1,802.8 L650.2,798.8 L639.7,798.8 L636.5,807.8 L634.5,797.3 L632.0,796.6 L602.3,796.4 L595.8,797.8 L585.4,801.8 L580.1,799.8 L573.6,800.8 L567.1,798.8 L563.2,796.8 L560.6,800.8 L542.4,801.3 L534.6,797.3 L530.7,798.8 L524.2,799.8 L520.3,797.3 L511.1,800.3 L498.1,801.8 L490.3,798.8 L482.5,802.8 L476.0,802.8 L472.1,796.8 L469.5,799.8 L460.4,806.8 L459.0,796.8 L455.2,796.8 L450.0,803.8 L446.0,804.8 L443.4,798.8 L442.1,801.8 L433.0,802.8 L427.8,805.8 L422.6,796.8 L420.0,798.8 L413.8,801.8 L412.5,804.8 L404.7,803.8 L394.3,802.8 L387.8,798.3 L381.2,798.8 L376.0,797.3 L374.7,796.4 L352.6,796.4 L350.0,797.8 L342.2,800.8 L331.8,805.3 L324.0,803.3 L314.8,804.8 L313.5,797.3 L311.0,797.3 L308.3,798.8 L303.1,802.8 L297.9,801.8 L292.7,802.8 L290.0,803.8 L284.2,802.8 L283.6,796.6 L282.3,796.6 L279.7,797.8 L271.9,802.0 L266.7,802.3 L265.0,801.8 L262.0,796.4 L236.0,796.4Z" fill="#8d89a2"/>
<rect x="261.3" y="785" width="4.6" height="21.2" rx="2.3" fill="#ece8ff" stroke="#8d7ef7" stroke-width="1.5"/>
<rect x="737.3" y="785" width="4.6" height="21.2" rx="2.3" fill="#ece8ff" stroke="#8d7ef7" stroke-width="1.5"/>
<rect x="1162.5" y="75" width="219" height="751" rx="8" fill="#1e1b2d"/>
<path d="M1162.5,107 V81 Q1162.5,75 1168.5,75 H1235.8 V107 Z" fill="#8d7ef7"/>
<rect x="1162.5" y="106.6" width="219" height="1.4" fill="#2b283c"/>
<text x="1181.6" y="95.8" font-size="14" font-weight="bold" fill="#fbfaff">Pitch</text>
<text x="1254.4" y="95.8" font-size="14" font-weight="bold" fill="#b9b5c6">Level</text>
<text x="1323.6" y="95.8" font-size="14" font-weight="bold" fill="#b9b5c6">Attack</text>
<text x="1180.6" y="138.9" font-size="14" font-weight="bold" letter-spacing="0.1" fill="#f3f2f8">TRACKS</text>
<rect x="1349.8" y="133.5" width="11.8" height="1.8" rx="0.9" fill="#a6a2b4"/>
<rect x="1181.2" y="157.5" width="182.5" height="28.6" rx="4" fill="#423e55" stroke="#7e6fe0" stroke-width="2"/>
<text x="1191.3" y="176.3" font-size="14.4" letter-spacing="0.1" stroke="#ebe9f2" stroke-width="0.25" fill="#ebe9f2">Lead vocal</text>
<circle cx="1322.6" cy="171.4" r="4.6" fill="#a9a6b3"/>
<g fill="none" stroke="#b3afc0" stroke-width="1.5" stroke-linecap="round" stroke-linejoin="round"><path d="M1341,164.9 H1348.6 M1342.6,164.9 L1342.3,171.1 L1340.4,173.2 H1349.2 L1347.3,171.1 L1347,164.9 M1344.8,173.2 V178.5"/></g>
<rect x="1180.9" y="194.4" width="183.1" height="29.2" rx="4" fill="#1e1b2d" stroke="#46425a" stroke-width="1.4"/>
<text x="1191.3" y="213.5" font-size="14.4" letter-spacing="0.1" stroke="#ebe9f2" stroke-width="0.25" fill="#ebe9f2">Lead vocal - 1</text>
<circle cx="1322.6" cy="208.6" r="4.6" fill="#a9a6b3"/>
<g fill="none" stroke="#b3afc0" stroke-width="1.5" stroke-linecap="round" stroke-linejoin="round"><path d="M1341,202.1 H1348.6 M1342.6,202.1 L1342.3,208.3 L1340.4,210.4 H1349.2 L1347.3,208.3 L1347,202.1 M1344.8,210.4 V215.7"/></g>
<rect x="1180.9" y="231.6" width="183.1" height="29.2" rx="4" fill="#1e1b2d" stroke="#46425a" stroke-width="1.4"/>
<text x="1191.3" y="250.7" font-size="14.4" letter-spacing="0.1" stroke="#ebe9f2" stroke-width="0.25" fill="#ebe9f2">Lead vocal - 2</text>
<circle cx="1322.6" cy="245.8" r="4.6" fill="#a9a6b3"/>
<g fill="none" stroke="#b3afc0" stroke-width="1.5" stroke-linecap="round" stroke-linejoin="round"><path d="M1341,239.3 H1348.6 M1342.6,239.3 L1342.3,245.5 L1340.4,247.6 H1349.2 L1347.3,245.5 L1347,239.3 M1344.8,247.6 V252.9"/></g>
<rect x="1180" y="278" width="185" height="1.4" fill="#3a364d"/>
<text x="1180.6" y="310.7" font-size="14" font-weight="bold" letter-spacing="0.1" fill="#f3f2f8">SCALE</text>
<rect x="1349.8" y="305.3" width="11.8" height="1.8" rx="0.9" fill="#a6a2b4"/>
<rect x="1180" y="327.6" width="185" height="26.2" rx="3" fill="#3d394f"/>
<text x="1188" y="345.4" font-size="14.4" letter-spacing="0.07" stroke="#e6e4ee" stroke-width="0.25" fill="#e6e4ee">F Harmonic Minor</text>
<path d="M1341.2,338.6 L1347.6,344 L1354,338.6" fill="none" stroke="#b3afc0" stroke-width="1.5" stroke-linecap="round" stroke-linejoin="round"/>
<text x="1180" y="380.3" font-size="14.4" letter-spacing="0.1" stroke="#e6e4ee" stroke-width="0.25" fill="#e6e4ee">Snap to scale notes</text>
<rect x="1338" y="369.4" width="27" height="13.6" rx="6.8" fill="#3a364c"/>
<circle cx="1344.8" cy="376.2" r="5" fill="#f5f4f8"/>
<rect x="1180" y="401.2" width="185" height="1.4" fill="#3a364d"/>
<text x="1180.6" y="434.0" font-size="14" font-weight="bold" letter-spacing="0.1" fill="#f3f2f8">FORMANT SHIFT</text>
<rect x="1349.8" y="428.6" width="11.8" height="1.8" rx="0.9" fill="#a6a2b4"/>
<rect x="1337.4" y="422.6" width="27.6" height="13.6" rx="6.8" fill="#8d7ef7"/>
<circle cx="1357.8" cy="429.4" r="5" fill="#f8f7fc"/>
<rect x="1180" y="451" width="185" height="28" rx="3" fill="#3d394f"/>
<text x="1189" y="470.4" font-size="14.4" stroke="#e6e4ee" stroke-width="0.25" fill="#e6e4ee">0</text>
<text x="1357.8" y="469" font-size="10" font-weight="bold" text-anchor="end" letter-spacing="0.6" fill="#8f8b9d">CT</text>
<rect x="1180" y="496" width="185" height="1.4" fill="#3a364d"/>
<text x="1180.6" y="528.4" font-size="14" font-weight="bold" letter-spacing="0.1" fill="#f3f2f8">NOTE SETTINGS</text>
<rect x="1349.8" y="523.0" width="11.8" height="1.8" rx="0.9" fill="#a6a2b4"/>
<text x="1180" y="559" font-size="14.4" letter-spacing="0.3" stroke="#aeaabb" stroke-width="0.25" fill="#aeaabb">Drift</text>
<text x="1276.8" y="559" font-size="14.4" letter-spacing="0.3" stroke="#aeaabb" stroke-width="0.25" fill="#aeaabb">Level</text>
<text x="1179.6" y="617.6" font-size="14.4" letter-spacing="0.12" stroke="#aeaabb" stroke-width="0.25" fill="#aeaabb">Formant Shift</text>
<text x="1278.3" y="617.6" font-size="14.4" letter-spacing="0.3" stroke="#aeaabb" stroke-width="0.25" fill="#aeaabb">Correction</text>
<rect x="1180.0" y="568.0" width="87.7" height="28" rx="3" fill="#3d394f"/>
<text x="1189.0" y="587.0" font-size="14.4" stroke="#e6e4ee" stroke-width="0.25" fill="#e6e4ee">0.00</text>
<text x="1261.7" y="586.4" font-size="12.5" text-anchor="end" stroke="#8f8b9d" stroke-width="0.25" fill="#8f8b9d">%</text>
<rect x="1276.8" y="568.0" width="87.5" height="28" rx="3" fill="#3d394f"/>
<text x="1285.8" y="587.0" font-size="14.4" stroke="#e6e4ee" stroke-width="0.25" fill="#e6e4ee">0.00</text>
<text x="1356.8" y="586.0" font-size="10" font-weight="bold" text-anchor="end" letter-spacing="0.6" fill="#8f8b9d">dB</text>
<rect x="1180.0" y="626.7" width="87.7" height="28" rx="3" fill="#3d394f"/>
<text x="1189.0" y="645.7" font-size="14.4" stroke="#e6e4ee" stroke-width="0.25" fill="#e6e4ee">0</text>
<text x="1260.2" y="644.7" font-size="10" font-weight="bold" text-anchor="end" letter-spacing="0.6" fill="#8f8b9d">CT</text>
<rect x="1278.0" y="626.7" width="87.5" height="28" rx="3" fill="#3d394f"/>
<text x="1287.0" y="645.7" font-size="14.4" stroke="#e6e4ee" stroke-width="0.25" fill="#e6e4ee">0</text>
<text x="1358.0" y="644.7" font-size="10" font-weight="bold" text-anchor="end" letter-spacing="0.6" fill="#8f8b9d">CT</text>
<rect x="1180" y="671.4" width="185" height="1.4" fill="#3a364d"/>
<rect x="1180" y="782.8" width="26.4" height="26.2" rx="2" fill="#3d3950"/>
<path d="M1190.6,790.2 L1196,795.9 L1190.6,801.6" fill="none" stroke="#f4f3f8" stroke-width="1.6" stroke-linecap="round" stroke-linejoin="round"/>
</svg>
</body></html>
